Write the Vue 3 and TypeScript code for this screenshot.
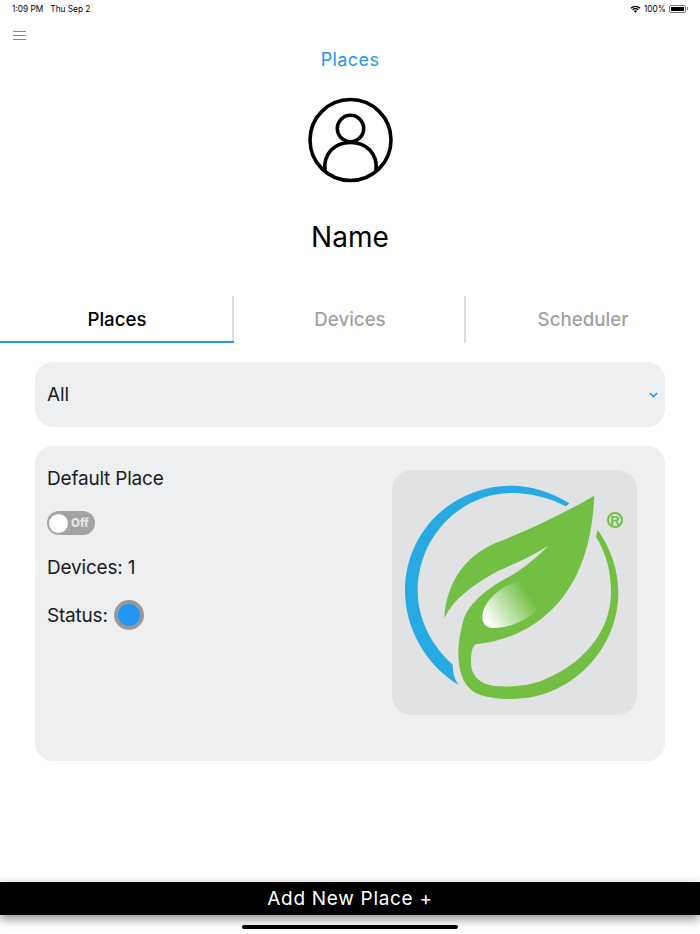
<template>
  <div class="page">
    <header class="status-bar">
      <div class="status-left"><span>1:09 PM</span><span>Thu Sep 2</span></div>
      <div class="status-right">
        <svg width="11" height="8" viewBox="0 0 12 9">
          <path d="M0.4 3 A8 8 0 0 1 11.6 3 L10.5 4.1 A6.4 6.4 0 0 0 1.5 4.1 Z" fill="#000" />
          <path d="M2.3 4.9 A5.3 5.3 0 0 1 9.7 4.9 L8.6 6 A3.7 3.7 0 0 0 3.4 6 Z" fill="#000" />
          <path d="M4.2 6.8 A2.6 2.6 0 0 1 7.8 6.8 L6 8.7 Z" fill="#000" />
        </svg>
        <span>100%</span>
        <div class="battery"><div class="battery-fill"></div></div>
        <div class="battery-tip"></div>
      </div>
    </header>

    <div class="menu-row">
      <button class="menu-btn" aria-label="Menu"><i></i><i></i><i></i></button>
    </div>

    <h1 class="title">Places</h1>

    <div class="profile">
      <svg width="85" height="86" viewBox="0 0 85 86" fill="none" stroke="#000" stroke-width="3.6">
        <circle cx="42.5" cy="43" r="40.5" />
        <circle cx="42.5" cy="31.5" r="13.2" />
        <path d="M17 74 C15 56 27 45.5 42.5 45.5 C58 45.5 70 56 68 74" />
      </svg>
      <div class="name">Name</div>
    </div>

    <nav class="tabs">
      <div
        v-for="(tab, i) in tabs"
        :key="tab"
        class="tab"
        :class="{ active: i === 0 }"
      >
        {{ tab }}
      </div>
    </nav>

    <main class="content">
      <div class="select">
        <span>All</span>
        <svg width="9" height="6" viewBox="0 0 9 6" fill="none" stroke="#2196f3" stroke-width="1.6">
          <path d="M0.8 1 L4.5 4.6 L8.2 1" />
        </svg>
      </div>

      <section class="card">
        <div class="info">
          <div class="place-name">Default Place</div>
          <div class="toggle">
            <div class="knob"></div>
            <span>Off</span>
          </div>
          <div class="devices">Devices: 1</div>
          <div class="status">
            <span>Status:</span>
            <div class="dot"></div>
          </div>
        </div>
        <div class="logo-tile">
          <svg width="245" height="245" viewBox="21 13 735 735">
            <defs>
              <linearGradient id="shine" x1="0.05" y1="0.8" x2="0.85" y2="0.35">
                <stop offset="0" stop-color="#ffffff" />
                <stop offset="1" stop-color="#72bf44" />
              </linearGradient>
            </defs>
            <path
              fill="#27aae1"
              d="M553 113 C500 80 440 60 380 60 C200 60 60 200 60 375 C60 490 125 600 220 657 C208 640 203 620 203 597 C140 540 98 460 98 375 C98 215 225 83 380 82 C440 82 495 98 543 122 Z"
            />
            <path
              fill="#72bf44"
              d="M628 90 C560 130 450 185 350 225 C250 260 185 340 178 457 C205 400 260 360 340 315 C400 290 450 265 490 240 C440 290 400 320 350 345 C290 380 245 425 235 465 C225 500 220 530 220 570 C222 620 235 665 280 685 C310 698 350 700 380 700 C560 700 700 550 700 380 C700 310 675 245 638 192 L633 213 C665 265 678 320 678 380 C678 500 590 600 470 645 C430 660 380 664 340 662 C290 660 258 635 258 590 C258 565 260 545 272 536 C350 528 420 500 480 450 C570 375 620 260 628 90 Z"
            />
            <path
              fill="url(#shine)"
              d="M292 450 C295 410 340 365 400 345 C440 340 470 420 465 430 C420 465 370 490 320 487 C300 485 290 470 292 450 Z"
            />
            <circle cx="690" cy="163" r="21" fill="none" stroke="#72bf44" stroke-width="6" />
            <text x="690" y="177" text-anchor="middle" class="reg">R</text>
          </svg>
        </div>
      </section>
    </main>

    <footer class="footer">
      <button class="add-btn">Add New Place +</button>
      <div class="home-area"><div class="home-bar"></div></div>
    </footer>
  </div>
</template>

<script setup lang="ts">
const tabs: string[] = ['Places', 'Devices', 'Scheduler']
</script>

<style>
html,
body {
  margin: 0;
  background: #fff;
}
</style>

<style scoped>
.page {
  width: 700px;
  height: 934px;
  display: flex;
  flex-direction: column;
  overflow: hidden;
  background: #fff;
  font-family: Inter, "Noto Sans", sans-serif;
  color: #1c1c1e;
}

.status-bar {
  height: 16px;
  padding: 1px 12px 0;
  box-sizing: border-box;
  display: flex;
  align-items: center;
  justify-content: space-between;
  font-size: 8.3px;
  color: #000;
}
.status-left {
  display: flex;
  gap: 7px;
}
.status-right {
  display: flex;
  align-items: center;
  gap: 3px;
}
.battery {
  width: 17px;
  height: 8px;
  padding: 1px;
  box-sizing: border-box;
  border: 1px solid #777;
  border-radius: 2px;
}
.battery-fill {
  height: 100%;
  background: #000;
}
.battery-tip {
  width: 1px;
  height: 3px;
  margin-left: -2px;
  background: #777;
}

.menu-row {
  height: 24px;
  padding-left: 13px;
  display: flex;
  align-items: flex-end;
}
.menu-btn {
  width: 13px;
  height: 9px;
  padding: 0;
  border: none;
  background: transparent;
  display: flex;
  flex-direction: column;
  justify-content: space-between;
}
.menu-btn i {
  display: block;
  height: 1px;
  background: #888;
}

.title {
  margin: 9px 0 0;
  height: 22px;
  line-height: 22px;
  text-align: center;
  font-size: 18px;
  font-weight: 400;
  letter-spacing: 0.4px;
  color: #2196f3;
}

.profile {
  margin-top: 26px;
  display: flex;
  flex-direction: column;
  align-items: center;
}
.name {
  margin-top: 36px;
  height: 36px;
  line-height: 36px;
  font-size: 28px;
  letter-spacing: 0.1px;
  color: #000;
}

.tabs {
  margin-top: 41px;
  height: 47px;
  display: grid;
  grid-template-columns: 234px 232px 234px;
}
.tab {
  position: relative;
  display: flex;
  align-items: center;
  justify-content: center;
  padding-left: 2px;
  font-size: 18.7px;
  font-weight: 500;
  color: #a2a2a2;
  border-right: 2px solid #ddd;
  box-sizing: border-box;
}
.tab:last-child {
  padding-left: 0;
  border-right: none;
}
.tab.active {
  color: #000;
}
.tab.active::after {
  content: "";
  position: absolute;
  left: 0;
  right: -2px;
  bottom: 0;
  height: 2px;
  background: #2196f3;
}

.content {
  flex: 1;
  padding: 19px 35px 0;
  display: flex;
  flex-direction: column;
  gap: 19px;
}
.select {
  height: 65px;
  padding: 0 7px 0 12px;
  display: flex;
  align-items: center;
  justify-content: space-between;
  border-radius: 18px;
  background: #edeff1;
  font-size: 19px;
  letter-spacing: -0.1px;
}
.card {
  height: 315px;
  padding: 24px 28px 0 12px;
  box-sizing: border-box;
  display: flex;
  justify-content: space-between;
  border-radius: 18px;
  background: #edeff1;
}
.info {
  font-size: 19px;
  letter-spacing: -0.2px;
}
.place-name {
  height: 18px;
  line-height: 18px;
}
.toggle {
  margin-top: 23px;
  width: 48px;
  height: 24px;
  padding: 0 2px;
  box-sizing: border-box;
  display: flex;
  align-items: center;
  gap: 3px;
  border-radius: 12px;
  background: #a3a3a3;
  color: #e6e6e6;
  font-size: 11.5px;
  font-weight: 800;
  letter-spacing: 0;
}
.knob {
  width: 19px;
  height: 19px;
  border-radius: 50%;
  background: #fff;
}
.devices {
  margin-top: 23px;
  height: 20px;
  line-height: 20px;
}
.status {
  margin-top: 22px;
  display: flex;
  align-items: center;
  gap: 6px;
}
.dot {
  width: 30px;
  height: 30px;
  box-sizing: border-box;
  border: 4px solid #999;
  border-radius: 50%;
  background: #2196f3;
}
.logo-tile {
  width: 245px;
  height: 245px;
  border-radius: 20px;
  background: #e0e2e4;
}
.logo-tile svg {
  display: block;
}
.reg {
  font-family: "Liberation Sans", sans-serif;
  font-size: 40px;
  font-weight: 700;
  fill: #72bf44;
}

.footer {
  height: 52px;
}
.add-btn {
  display: block;
  width: 100%;
  height: 33px;
  padding: 0;
  border: none;
  background: #000;
  color: #fff;
  font-family: inherit;
  font-size: 19px;
  font-weight: 400;
  letter-spacing: 0.7px;
  box-shadow: 0 4px 10px rgba(0, 0, 0, 0.45);
}
.home-area {
  display: flex;
  justify-content: center;
  padding-top: 10px;
}
.home-bar {
  position: relative;
  width: 216px;
  height: 3.5px;
  border-radius: 2px;
  background: #000;
}
</style>
